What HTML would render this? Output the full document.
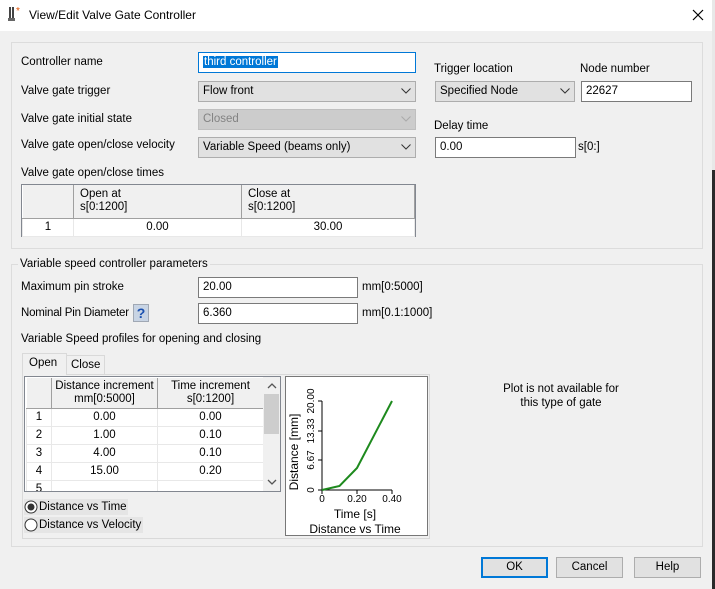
<!DOCTYPE html>
<html><head><meta charset="utf-8"><style>
*{box-sizing:border-box;margin:0;padding:0}
body{width:715px;height:589px;overflow:hidden;background:#f0f0f0;font-family:"Liberation Sans",sans-serif;font-size:11.5px;color:#000;position:relative}
.a{position:absolute;white-space:nowrap}
.lbl{position:absolute;white-space:nowrap;line-height:14px}
.inp{position:absolute;background:#fff;border:1px solid #7a7a7a;height:21px;padding:2px 4px;line-height:15px}
.sel{position:absolute;background:#e1e1e1;border:1px solid #adadad;height:21px;padding:2px 4px;line-height:15px}
.sel svg{position:absolute;right:4px;top:6px}
.grp{position:absolute;border:1px solid #dcdcdc}
table{border-collapse:collapse;background:#fff}
td{border:1px solid #e8e8e8;text-align:center;height:18px;padding:0}
th{font-weight:normal;background:#f0f0f0;border-right:1px solid #a0a0a0;border-bottom:1px solid #a0a0a0;line-height:13px}
.btn{position:absolute;background:#e1e1e1;border:1px solid #adadad;height:21px;width:67px;text-align:center;line-height:19px}
</style></head><body>
<div class="a" style="left:0;top:0;width:715px;height:31px;background:#fff"></div>
<svg class="a" style="left:6px;top:6px" width="18" height="18"><rect x="3" y="1" width="2" height="11" fill="#444"/><rect x="6" y="1" width="2" height="11" fill="#444"/><rect x="2" y="12" width="7" height="3" fill="#666"/><text x="10" y="8" font-size="10" fill="#e05000">*</text></svg>
<div class="a" style="left:29px;top:8px;font-size:12px">View/Edit Valve Gate Controller</div>
<svg class="a" style="left:692px;top:9px" width="12" height="12"><path d="M1 1L11 11M11 1L1 11" stroke="#000" stroke-width="1.2"/></svg>
<div class="a" style="left:712px;top:0;width:3px;height:589px;background:#2a2a2a"></div>
<div class="a" style="left:712px;top:0;width:3px;height:170px;background:#e8e8e8"></div>

<div class="grp" style="left:11px;top:42px;width:692px;height:207px"></div>
<div class="lbl" style="left:21px;top:55px">Controller name</div>
<div class="inp" style="left:198px;top:52px;width:218px;border-color:#0078d7"><span style="background:#0078d7;color:#fff;padding:0 1px">third controller</span></div>
<div class="lbl" style="left:21px;top:84px">Valve gate trigger</div>
<div class="sel" style="left:198px;top:81px;width:218px">Flow front<svg width="10" height="6"><path d="M0.5 0.5L5 5L9.5 0.5" stroke="#333" fill="none"/></svg></div>
<div class="lbl" style="left:21px;top:112px">Valve gate initial state</div>
<div class="sel" style="left:198px;top:109px;width:218px;background:#cccccc;border-color:#bfbfbf;color:#838383">Closed<svg width="10" height="6"><path d="M0.5 0.5L5 5L9.5 0.5" stroke="#aaa" fill="none"/></svg></div>
<div class="lbl" style="left:21px;top:138px">Valve gate open/close velocity</div>
<div class="sel" style="left:198px;top:137px;width:218px">Variable Speed (beams only)<svg width="10" height="6"><path d="M0.5 0.5L5 5L9.5 0.5" stroke="#333" fill="none"/></svg></div>
<div class="lbl" style="left:21px;top:166px">Valve gate open/close times</div>
<div class="a" style="left:21px;top:184px;width:395px;height:53px;border:1px solid #828790;background:#fff">
<table style="width:393px"><tr style="height:33px"><th style="width:51px"></th><th style="width:168px;text-align:left;padding-left:6px">Open at<br>s[0:1200]</th><th style="text-align:left;padding-left:6px">Close at<br>s[0:1200]</th></tr>
<tr><td>1</td><td>0.00</td><td>30.00</td></tr></table></div>

<div class="lbl" style="left:434px;top:62px">Trigger location</div>
<div class="lbl" style="left:580px;top:62px">Node number</div>
<div class="sel" style="left:435px;top:81px;width:140px">Specified Node<svg width="10" height="6"><path d="M0.5 0.5L5 5L9.5 0.5" stroke="#333" fill="none"/></svg></div>
<div class="inp" style="left:581px;top:81px;width:111px">22627</div>
<div class="lbl" style="left:434px;top:119px">Delay time</div>
<div class="inp" style="left:435px;top:137px;width:141px">0.00</div>
<div class="lbl" style="left:578px;top:140px">s[0:]</div>

<div class="grp" style="left:11px;top:264px;width:692px;height:283px"></div>
<div class="lbl" style="left:18px;top:257px;background:#f0f0f0;padding:0 2px">Variable speed controller parameters</div>
<div class="lbl" style="left:21px;top:280px">Maximum pin stroke</div>
<div class="inp" style="left:198px;top:277px;width:160px">20.00</div>
<div class="lbl" style="left:362px;top:280px">mm[0:5000]</div>
<div class="lbl" style="left:21px;top:306px;letter-spacing:-0.2px">Nominal Pin Diameter</div>
<div class="a" style="left:133px;top:304px;width:16px;height:18px;background:#c8d4e4;border:1px solid #a0a8b4;color:#1a50b0;font-weight:bold;font-size:14px;text-align:center;line-height:16px">?</div>
<div class="inp" style="left:198px;top:303px;width:160px">6.360</div>
<div class="lbl" style="left:362px;top:306px">mm[0.1:1000]</div>
<div class="lbl" style="left:21px;top:332px">Variable Speed profiles for opening and closing</div>

<div class="a" style="left:22px;top:374px;width:408px;height:165px;border:1px solid #d9d9d9;background:#f0f0f0"></div>
<div class="a" style="left:66px;top:355px;width:39px;height:20px;border:1px solid #d9d9d9;border-bottom:none;padding-left:4px;line-height:18px">Close</div>
<div class="a" style="left:22px;top:353px;width:45px;height:22px;border:1px solid #d9d9d9;border-bottom:none;background:#f0f0f0;padding-left:6px;line-height:19px">Open</div>
<div class="a" style="left:24px;top:376px;width:257px;height:116px;border:1px solid #828790;background:#fff;overflow:hidden">
<table style="width:238px;margin:1px 0 0 1px"><tr style="height:30px"><th style="width:25px"></th><th style="width:106px">Distance increment<br>mm[0:5000]</th><th>Time increment<br>s[0:1200]</th></tr>
<tr style="height:17px"><td>1</td><td>0.00</td><td>0.00</td></tr>
<tr style="height:17px"><td>2</td><td>1.00</td><td>0.10</td></tr>
<tr style="height:17px"><td>3</td><td>4.00</td><td>0.10</td></tr>
<tr style="height:17px"><td>4</td><td>15.00</td><td>0.20</td></tr>
<tr style="height:17px"><td>5</td><td></td><td></td></tr></table>
<div class="a" style="left:238px;top:0;width:17px;height:114px;background:#f0f0f0"></div>
<div class="a" style="left:239px;top:17px;width:15px;height:40px;background:#cdcdcd"></div>
<svg class="a" style="left:242px;top:6px" width="10" height="6"><path d="M1 5L5 1L9 5" stroke="#555" fill="none" stroke-width="1.3"/></svg>
<svg class="a" style="left:242px;top:102px" width="10" height="6"><path d="M1 1L5 5L9 1" stroke="#555" fill="none" stroke-width="1.3"/></svg>
</div>
<div class="a" style="left:24px;top:499px;width:104px;height:16px;background:#e5e5e5"></div>
<div class="a" style="left:24px;top:517px;width:119px;height:16px;background:#e5e5e5"></div>
<svg class="a" style="left:24px;top:500px" width="14" height="32"><circle cx="7" cy="7" r="6" fill="#fff" stroke="#333"/><circle cx="7" cy="7" r="3.5" fill="#333"/><circle cx="7" cy="25" r="6" fill="#fff" stroke="#333"/></svg>
<div class="lbl" style="left:39px;top:500px">Distance vs Time</div>
<div class="lbl" style="left:39px;top:518px">Distance vs Velocity</div>

<svg class="a" style="left:285px;top:376px" width="143" height="160">
<rect x="0.5" y="0.5" width="142" height="159" fill="#fff" stroke="#777"/>
<g transform="translate(-285,-376)" font-family="Liberation Sans" font-size="10">
<path d="M322 401V490H392M318 401H322M318 431H322M318 460H322M318 490H322M322 490V494M357 490V494M392 490V494" stroke="#000" fill="none"/>
<polyline points="322,490 339.5,486 357,468 392,401" stroke="#1e8a1e" stroke-width="2" fill="none"/>
<text x="322" y="502" text-anchor="middle">0</text><text x="357" y="502" text-anchor="middle">0.20</text><text x="392" y="502" text-anchor="middle">0.40</text>
<g text-anchor="middle"><text transform="translate(314,490) rotate(-90)">0</text><text transform="translate(314,460) rotate(-90)">6.67</text><text transform="translate(314,431) rotate(-90)">13.33</text><text transform="translate(314,401) rotate(-90)">20.00</text>
<text font-size="12" transform="translate(298,452) rotate(-90)">Distance [mm]</text></g>
<text x="355" y="518" font-size="12" text-anchor="middle">Time [s]</text>
<text x="355" y="533" font-size="12" text-anchor="middle">Distance vs Time</text>
</g></svg>

<div class="lbl" style="left:461px;top:382px;width:200px;text-align:center">Plot is not available for<br>this type of gate</div>

<div class="btn" style="left:481px;top:557px;border:2px solid #0078d7;line-height:17px">OK</div>
<div class="btn" style="left:556px;top:557px">Cancel</div>
<div class="btn" style="left:634px;top:557px">Help</div>
</body></html>
